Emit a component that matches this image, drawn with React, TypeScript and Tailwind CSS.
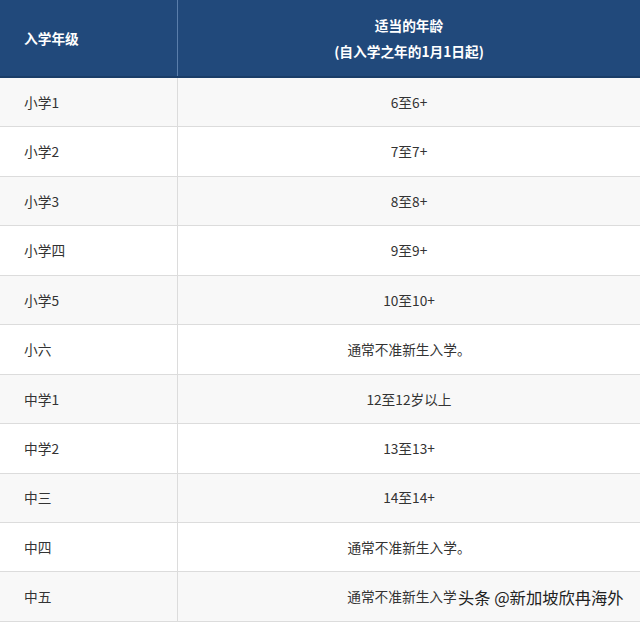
const rows: { grade: string; age: string; pad?: boolean }[] = [
  { grade: "小学1", age: "6至6+" },
  { grade: "小学2", age: "7至7+" },
  { grade: "小学3", age: "8至8+" },
  { grade: "小学四", age: "9至9+" },
  { grade: "小学5", age: "10至10+" },
  { grade: "小六", age: "通常不准新生入学。" },
  { grade: "中学1", age: "12至12岁以上" },
  { grade: "中学2", age: "13至13+" },
  { grade: "中三", age: "14至14+" },
  { grade: "中四", age: "通常不准新生入学。" },
  { grade: "中五", age: "通常不准新生入学", pad: true },
];

export default function App() {
  return (
    <div className="relative w-[640px] h-[622px] overflow-hidden bg-white font-['Noto_Sans_CJK_SC','Noto_Sans',sans-serif] text-[13.7px] text-[#333]">
      {/* header */}
      <div className="flex h-[78px] bg-[#21497b] border-b-2 border-[#1a3d68] text-white font-bold">
        <div className="w-[178px] shrink-0 flex items-center pl-[24px] border-r border-[#5a7eab]">
          入学年级
        </div>
        <div className="flex-1 flex flex-col items-center justify-center leading-[26px]">
          <span>适当的年龄</span>
          <span>(自入学之年的1月1日起)</span>
        </div>
      </div>

      {rows.map((r, i) => (
        <div
          key={i}
          className={
            "flex h-[49.45px] border-b border-[#dcdcdc] " +
            (i % 2 === 0 ? "bg-[#f8f8f8]" : "bg-white")
          }
        >
          <div className="w-[178px] shrink-0 flex items-center pl-[24px] border-r border-[#dcdcdc]">
            {r.grade}
          </div>
          <div
            className={
              "flex-1 flex items-center justify-center " +
              (r.pad ? "pr-[14px]" : "")
            }
          >
            {r.age}
          </div>
        </div>
      ))}

      {/* watermark */}
      <div className="absolute left-[458px] top-[586px] text-[16.3px] leading-[22px] text-[#222] font-['Noto_Sans_CJK_SC',sans-serif]">
        头条 @新加坡欣冉海外
      </div>
    </div>
  );
}
